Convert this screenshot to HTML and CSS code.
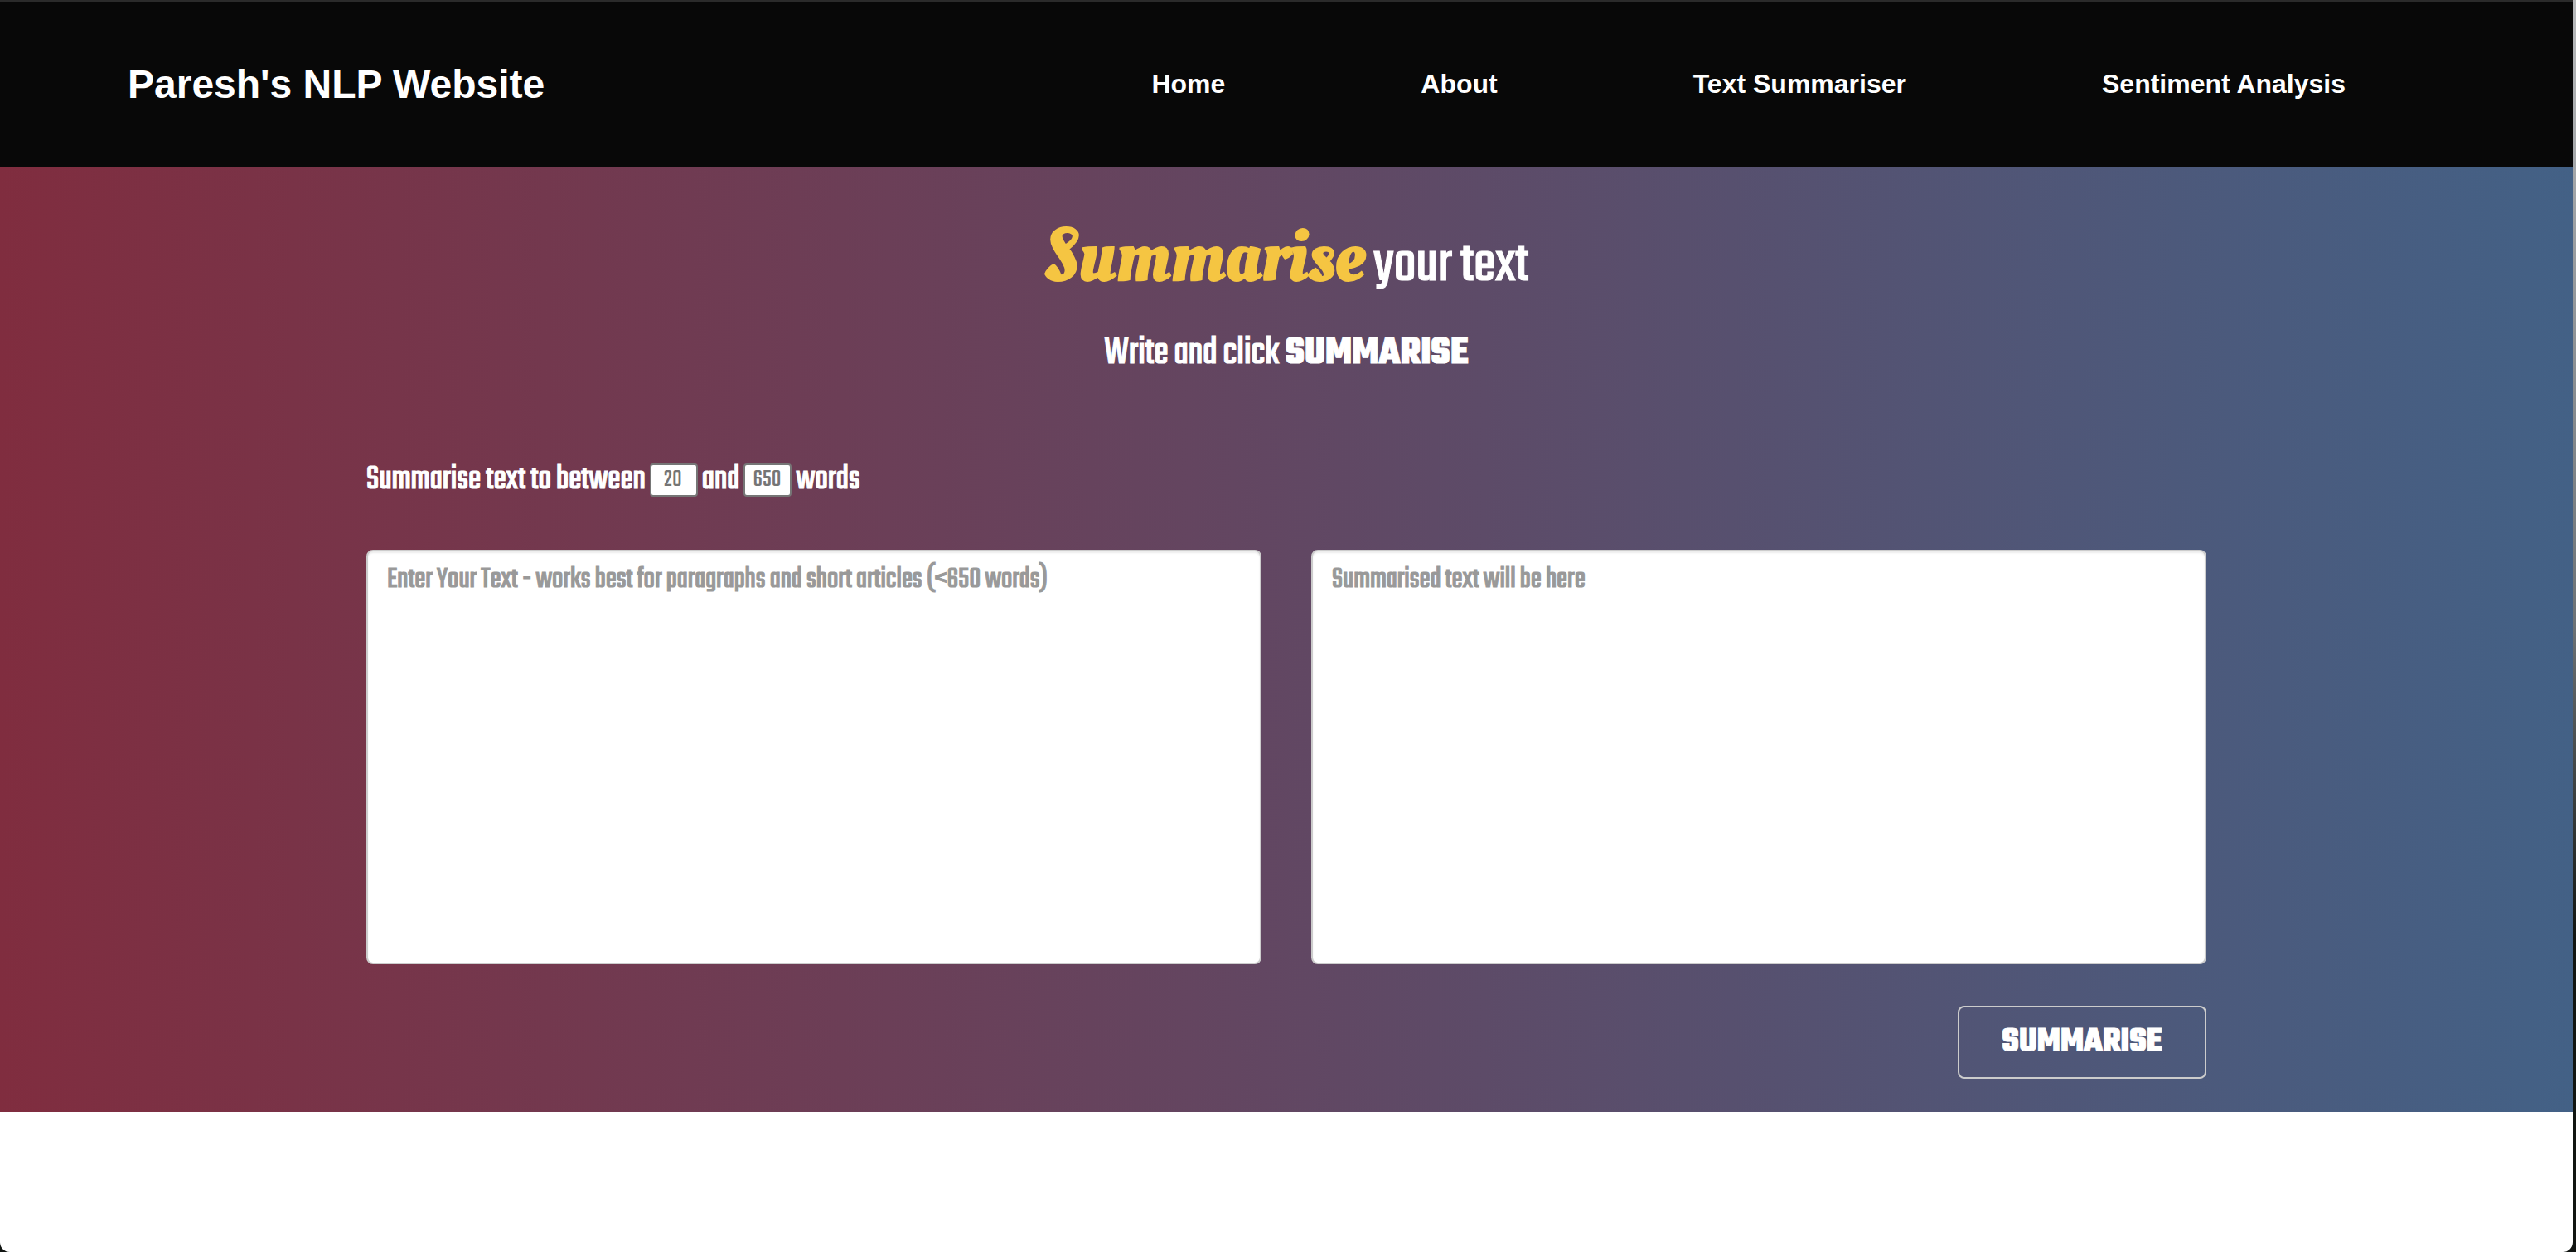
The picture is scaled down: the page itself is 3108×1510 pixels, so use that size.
FILE: index.html
```html
<!DOCTYPE html>
<html lang="en">
<head>
<meta charset="utf-8">
<meta name="viewport" content="width=device-width, initial-scale=1">
<title>Paresh's NLP Website</title>
<link rel="stylesheet" href="styles.css">
</head>
<body>
<div class="window">
  <header class="site-header">
    <a class="brand" href="#">Paresh's NLP Website</a>
    <nav class="site-nav">
      <a href="#">Home</a>
      <a href="#">About</a>
      <a href="#">Text Summariser</a>
      <a href="#">Sentiment Analysis</a>
    </nav>
  </header>
  <main class="summariser">
    <h1 class="title"><span class="title-accent">Summarise</span> your text</h1>
    <p class="subtitle">Write and click <strong>SUMMARISE</strong></p>
    <form class="form">
      <div class="limits">
        <label for="min-words">Summarise text to between</label>
        <input id="min-words" type="text" placeholder="20">
        <label for="max-words">and</label>
        <input id="max-words" type="text" placeholder="650">
        <span>words</span>
      </div>
      <div class="panes">
        <textarea class="pane" aria-label="Your text" placeholder="Enter Your Text - works best for paragraphs and short articles (&lt;650 words)"></textarea>
        <textarea class="pane" aria-label="Summary" placeholder="Summarised text will be here"></textarea>
      </div>
      <button class="submit" type="button">SUMMARISE</button>
    </form>
  </main>
</div>
</body>
</html>
```
FILE: styles.css
```css
* {
  box-sizing: border-box;
}

html {
  background: linear-gradient(#b8babc, #6c7276 50%, #111512 75%);
}

body {
  margin: 0;
  font-family: Teko, "Roboto Condensed", "Open Sans Condensed", Lato, sans-serif;
  font-weight: 400;
  color: #fff;
  -webkit-text-stroke: 1px currentColor;
}

.window {
  min-height: 100vh;
  margin-right: 4px;
  background: #fff;
  border-radius: 0 0 12px 12px;
  overflow: hidden;
}

.site-header {
  display: flex;
  align-items: center;
  justify-content: space-between;
  height: 202px;
  padding: 0 274px 2px 154px;
  background: #080808;
  border-top: 2px solid #2b2b2b;
  font-family: "Liberation Sans", sans-serif;
  font-weight: 700;
  -webkit-text-stroke: 0;
}

.site-header a {
  color: #fff;
  text-decoration: none;
}

.brand {
  font-size: 48px;
}

.site-nav {
  display: flex;
  gap: 236px;
  font-size: 32px;
}

.summariser {
  padding: 68px 0 40px;
  background: linear-gradient(to right, #802d3f, #436186);
}

.title {
  margin: 0;
  font-size: 72px;
  font-weight: 400;
  line-height: 100px;
  text-align: center;
}

.title-accent {
  color: #f5c542;
  font-family: "Oleo Script", Lobster, "Liberation Serif", serif;
  font-size: 90px;
  line-height: 80px;
  -webkit-text-stroke-width: 2px;
}

.subtitle {
  margin: 26px 0 0;
  font-size: 48px;
  line-height: 60px;
  text-align: center;
}

.subtitle strong {
  font-weight: 700;
}

.form {
  display: flex;
  flex-direction: column;
  width: 100%;
  max-width: 2220px;
  margin: 0 auto;
}

.limits {
  display: flex;
  align-items: center;
  gap: 5px;
  margin-top: 92px;
  font-size: 42px;
  line-height: 60px;
}

.limits input {
  width: 58px;
  height: 40px;
  padding: 0 2px 2px 0;
  border: 2px solid #767676;
  border-radius: 4px;
  background: #fff;
  font: inherit;
  font-size: 30px;
  line-height: 36px;
  text-align: center;
  -webkit-text-stroke: 0;
}

.limits input::placeholder {
  color: #757575;
}

.panes {
  display: grid;
  grid-template-columns: 1fr 1fr;
  gap: 60px;
  margin-top: 54px;
}

.pane {
  height: 500px;
  padding: 15px 23px;
  border: 2px solid #ccc;
  border-radius: 8px;
  background: #fff;
  box-shadow: inset 0 2px 2px rgba(0, 0, 0, 0.08);
  font: inherit;
  font-size: 36px;
  line-height: 40px;
  resize: none;
}

.pane::placeholder {
  color: #999;
}

.submit {
  align-self: flex-end;
  width: 300px;
  height: 88px;
  margin-top: 50px;
  padding: 0;
  border: 2px solid #ccc;
  border-radius: 8px;
  background: transparent;
  color: #fff;
  font: inherit;
  font-size: 42px;
  font-weight: 700;
}
```
